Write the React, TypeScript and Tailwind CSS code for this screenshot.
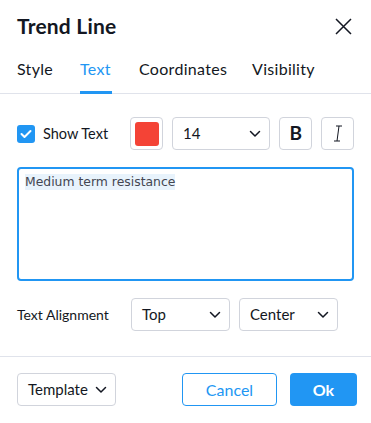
import React from "react";

const Chevron = () => (
  <svg width="12" height="8" viewBox="0 0 12 8" fill="none">
    <path d="M1.5 1.5 L6 6 L10.5 1.5" stroke="#131722" strokeWidth="1.5" strokeLinecap="round" strokeLinejoin="round" />
  </svg>
);

const Select = ({ label, className }: { label: string; className: string }) => (
  <div className={`flex h-[33px] items-center justify-between rounded-[4px] border border-[#d1d4dc] bg-white pl-[10px] pr-[8px] ${className}`}>
    <span className="text-[15px] text-[#131722]">{label}</span>
    <Chevron />
  </div>
);

const tabs = [
  { t: "Style", w: "w-[63px]" },
  { t: "Text", w: "w-[59px]" },
  { t: "Coordinates", w: "w-[113px]" },
  { t: "Visibility", w: "w-[70px]" },
];

export default function App() {
  return (
    <div className="flex h-[423px] w-[371px] flex-col bg-white text-[#131722]" style={{ fontFamily: "Lato, 'Noto Sans', sans-serif" }}>
      <div className="flex h-[52px] items-center justify-between pl-[17px] pr-[19px]">
        <span className="text-[21px] font-bold tracking-[0.2px] text-[#131722]">Trend Line</span>
        <svg width="17" height="17" viewBox="0 0 17 17" fill="none">
          <path d="M1 1 L16 16 M16 1 L1 16" stroke="#131722" strokeWidth="1.5" />
        </svg>
      </div>
      <div className="flex h-[42px] items-stretch border-b border-[#e0e3eb] px-[17px]">
        {tabs.map(({ t, w }) => (
          <div key={t} className={`flex ${w}`}>
            <div className={`relative flex items-center pb-[7px] text-[16px] tracking-[0.3px] ${t === "Text" ? "text-[#2196f3]" : "text-[#131722]"}`}>
              {t}
              {t === "Text" && <div className="absolute bottom-[-1px] left-0 right-[-1px] h-[3px] bg-[#2196f3]" />}
            </div>
          </div>
        ))}
      </div>
      <div className="flex flex-col px-[17px] pt-[23px]">
        <div className="flex h-[33px] items-center">
          <div className="flex w-[114px] items-center">
            <div className="flex h-[18px] w-[18px] items-center justify-center rounded-[3px] bg-[#2196f3]">
              <svg width="12" height="10" viewBox="0 0 12 10" fill="none">
                <path d="M1.5 5 L4.5 8 L10.5 2" stroke="white" strokeWidth="2" strokeLinecap="round" strokeLinejoin="round" />
              </svg>
            </div>
            <span className="ml-[8px] text-[14.5px] text-[#131722]">Show Text</span>
          </div>
          <div className="flex h-[33px] w-[33px] items-center justify-center rounded-[4px] border border-[#d1d4dc]">
            <div className="h-[24px] w-[24px] rounded-[3px] bg-[#f44336]" />
          </div>
          <Select label="14" className="ml-[9px] w-[99px]" />
          <div className="ml-[9px] flex h-[33px] w-[33px] items-center justify-center rounded-[4px] border border-[#d1d4dc] text-[19px] font-bold">B</div>
          <div className="ml-[9px] flex h-[33px] w-[33px] items-center justify-center rounded-[4px] border border-[#d1d4dc]">
            <svg width="12" height="17" viewBox="0 0 12 17" fill="none">
              <path d="M4 1 H10 M2 16 H8 M7 1 L5 16" stroke="#131722" strokeWidth="1" />
            </svg>
          </div>
        </div>
        <div className="mt-[17px] flex h-[114px] items-start rounded-[4px] border-2 border-[#2196f3] px-[6px] pt-[5px]">
          <span className="block bg-[#e8f3fc] leading-[16px] text-[#434651]" style={{ fontFamily: "'DejaVu Sans', sans-serif", fontSize: "12.4px" }}>Medium term resistance</span>
        </div>
        <div className="mt-[17px] flex h-[33px] items-center">
          <span className="w-[114px] text-[14px] text-[#131722]">Text Alignment</span>
          <Select label="Top" className="w-[99px]" />
          <Select label="Center" className="ml-[9px] w-[99px]" />
        </div>
      </div>
      <div className="mt-[25px] h-px w-full bg-[#e0e3eb]" />
      <div className="flex items-center px-[14px] pt-[16px]">
        <Select label="Template" className="ml-[3px] w-[99px]" />
        <div className="ml-auto flex h-[33px] w-[95px] items-center justify-center rounded-[4px] border border-[#2196f3] text-[16px] text-[#2196f3]">Cancel</div>
        <div className="ml-[13px] flex h-[33px] w-[67px] items-center justify-center rounded-[4px] bg-[#2196f3] text-[16px] font-bold text-white">Ok</div>
      </div>
    </div>
  );
}
